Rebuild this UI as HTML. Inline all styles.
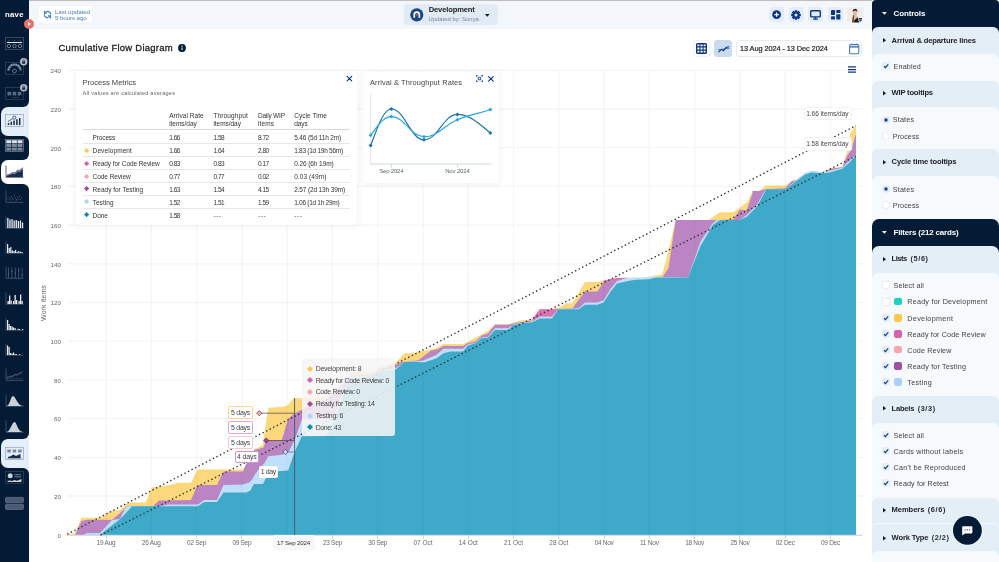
<!DOCTYPE html>
<html><head><meta charset="utf-8"><title>Cumulative Flow Diagram</title><style>
html,body{margin:0;padding:0}
body{width:999px;height:562px;overflow:hidden;background:#fff;position:relative;font-family:"Liberation Sans",sans-serif}
.abs{position:absolute}
svg{overflow:visible}
.t{position:absolute;white-space:pre;line-height:1.15;font-family:"Liberation Sans",sans-serif}
.panel{background:#fff;border-radius:4px;box-shadow:0 1px 6px rgba(60,80,110,0.09)}
</style></head>
<body>
<div id="root" style="position:absolute;left:0;top:0;width:999px;height:562px;will-change:transform">
<svg class="abs" style="left:0;top:0" width="999" height="562" viewBox="0 0 999 562">
<line x1="68" x2="862.5" y1="534.7" y2="534.7" stroke="#f5f5f5" stroke-width="1.3"/>
<line x1="68" x2="862.5" y1="496.0" y2="496.0" stroke="#f5f5f5" stroke-width="1.3"/>
<line x1="68" x2="862.5" y1="457.3" y2="457.3" stroke="#f5f5f5" stroke-width="1.3"/>
<line x1="68" x2="862.5" y1="418.6" y2="418.6" stroke="#f5f5f5" stroke-width="1.3"/>
<line x1="68" x2="862.5" y1="379.9" y2="379.9" stroke="#f5f5f5" stroke-width="1.3"/>
<line x1="68" x2="862.5" y1="341.2" y2="341.2" stroke="#f5f5f5" stroke-width="1.3"/>
<line x1="68" x2="862.5" y1="302.5" y2="302.5" stroke="#f5f5f5" stroke-width="1.3"/>
<line x1="68" x2="862.5" y1="263.8" y2="263.8" stroke="#f5f5f5" stroke-width="1.3"/>
<line x1="68" x2="862.5" y1="225.1" y2="225.1" stroke="#f5f5f5" stroke-width="1.3"/>
<line x1="68" x2="862.5" y1="186.4" y2="186.4" stroke="#f5f5f5" stroke-width="1.3"/>
<line x1="68" x2="862.5" y1="147.7" y2="147.7" stroke="#f5f5f5" stroke-width="1.3"/>
<line x1="68" x2="862.5" y1="109.0" y2="109.0" stroke="#f5f5f5" stroke-width="1.3"/>
<line x1="68" x2="862.5" y1="70.3" y2="70.3" stroke="#f5f5f5" stroke-width="1.3"/>
<line x1="106.0" x2="106.0" y1="71" y2="535" stroke="#f5f5f5" stroke-width="1.3"/>
<line x1="151.3" x2="151.3" y1="71" y2="535" stroke="#f5f5f5" stroke-width="1.3"/>
<line x1="196.6" x2="196.6" y1="71" y2="535" stroke="#f5f5f5" stroke-width="1.3"/>
<line x1="241.8" x2="241.8" y1="71" y2="535" stroke="#f5f5f5" stroke-width="1.3"/>
<line x1="287.1" x2="287.1" y1="71" y2="535" stroke="#f5f5f5" stroke-width="1.3"/>
<line x1="332.4" x2="332.4" y1="71" y2="535" stroke="#f5f5f5" stroke-width="1.3"/>
<line x1="377.7" x2="377.7" y1="71" y2="535" stroke="#f5f5f5" stroke-width="1.3"/>
<line x1="423.0" x2="423.0" y1="71" y2="535" stroke="#f5f5f5" stroke-width="1.3"/>
<line x1="468.2" x2="468.2" y1="71" y2="535" stroke="#f5f5f5" stroke-width="1.3"/>
<line x1="513.5" x2="513.5" y1="71" y2="535" stroke="#f5f5f5" stroke-width="1.3"/>
<line x1="558.8" x2="558.8" y1="71" y2="535" stroke="#f5f5f5" stroke-width="1.3"/>
<line x1="604.1" x2="604.1" y1="71" y2="535" stroke="#f5f5f5" stroke-width="1.3"/>
<line x1="649.4" x2="649.4" y1="71" y2="535" stroke="#f5f5f5" stroke-width="1.3"/>
<line x1="694.6" x2="694.6" y1="71" y2="535" stroke="#f5f5f5" stroke-width="1.3"/>
<line x1="739.9" x2="739.9" y1="71" y2="535" stroke="#f5f5f5" stroke-width="1.3"/>
<line x1="785.2" x2="785.2" y1="71" y2="535" stroke="#f5f5f5" stroke-width="1.3"/>
<line x1="830.5" x2="830.5" y1="71" y2="535" stroke="#f5f5f5" stroke-width="1.3"/>
<line x1="67" x2="862.5" y1="535.3" y2="535.3" stroke="#ccd6eb" stroke-width="1"/>
<polygon points="67.2,533.5 75.0,533.5 81.5,517.8 101.0,517.8 107.0,513.0 113.0,510.5 120.0,510.0 126.0,504.0 132.0,502.5 145.5,502.5 152.0,487.5 158.5,486.5 171.0,485.0 177.5,482.8 191.0,482.8 197.5,469.5 243.0,469.5 246.0,464.0 254.8,449.0 262.6,445.6 268.3,407.8 281.8,407.1 288.2,405.0 293.2,398.4 302.0,398.0 326.0,398.0 344.0,382.7 351.0,373.0 372.5,372.0 379.6,366.7 395.7,363.0 404.2,353.2 411.4,353.2 431.0,349.6 437.0,347.8 443.4,344.0 463.0,344.0 468.3,341.6 487.9,331.0 495.0,324.2 508.3,324.2 520.8,320.6 527.0,319.9 532.5,319.0 539.6,309.2 552.0,309.2 559.0,307.4 566.3,303.3 572.5,303.3 585.0,282.0 597.4,282.0 603.6,280.4 617.0,278.0 626.8,277.7 644.6,277.7 651.7,276.3 662.2,274.5 668.5,250.5 675.6,219.9 708.5,219.9 720.0,212.2 733.4,212.2 739.6,207.8 746.8,202.5 753.0,190.9 759.6,191.0 765.8,185.6 785.4,185.6 791.6,181.2 797.0,179.4 805.0,173.2 811.2,171.4 823.6,172.3 830.7,167.8 842.3,167.0 846.8,152.7 850.3,133.0 856.0,125.0 856.0,534.8 67.2,534.8" fill="#fcd77b"/>
<polygon points="75.0,534.8 81.5,521.0 87.0,519.8 112.0,519.8 119.0,514.0 125.0,508.0 126.0,506.2 132.0,506.2 153.0,506.2 159.0,500.5 191.0,500.0 197.5,485.0 217.0,485.0 223.5,471.5 243.0,471.5 246.0,464.5 254.0,449.9 263.3,447.7 266.2,440.5 281.8,439.9 288.2,418.5 294.6,413.5 302.0,409.4 313.0,405.0 326.0,399.5 332.5,394.5 340.5,386.0 351.0,375.6 372.5,374.5 379.6,369.0 395.7,365.0 402.5,361.4 404.2,362.0 418.5,360.3 431.0,350.5 437.0,349.6 443.4,346.0 463.0,346.0 468.0,343.0 475.4,341.6 481.6,335.4 488.0,333.6 495.0,324.7 508.0,324.7 512.8,323.8 520.8,322.0 530.0,321.0 532.5,321.6 539.6,316.7 552.0,316.7 558.3,309.2 572.5,308.3 585.0,291.4 597.4,291.4 603.6,282.5 617.0,279.0 626.8,278.4 635.7,278.0 644.6,278.0 651.7,277.0 662.2,277.5 668.5,268.3 675.6,219.9 708.5,219.9 716.5,219.9 733.4,219.4 739.6,210.0 746.8,210.0 753.0,191.8 759.6,191.5 765.0,189.2 785.4,188.3 791.6,181.2 797.0,179.8 802.0,176.0 805.0,173.2 811.2,171.4 823.6,172.3 830.7,168.7 842.3,167.3 846.8,156.3 851.2,150.0 856.0,134.0 856.0,534.8 75.0,534.8" fill="#bb84c2"/>
<polygon points="532.5,319.0 539.6,309.2 552.0,309.2 558.3,308.6 552.0,316.7 539.6,316.7 532.5,321.6" fill="#d974b7"/>
<polygon points="603.6,280.4 617.0,278.0 626.8,277.7 626.8,278.6 617.0,279.6 603.6,282.5" fill="#d974b7"/>
<polygon points="752.5,191.0 759.6,191.0 765.0,189.2 759.6,192.2 752.5,192.6" fill="#d974b7"/>
<polygon points="83.0,534.8 87.0,533.0 100.0,533.0 112.0,520.0 120.0,519.0 126.0,506.2 132.0,506.2 159.0,506.2 169.0,504.5 198.0,504.5 204.0,500.0 217.0,500.0 223.5,485.0 243.0,484.5 250.0,482.0 253.0,478.0 255.5,473.4 260.0,468.0 264.7,462.7 268.3,456.3 281.8,454.8 288.2,452.7 294.6,439.9 301.8,419.5 332.5,418.6 339.0,404.0 345.4,387.5 351.0,376.5 372.5,375.5 379.6,370.5 396.2,368.0 404.2,362.0 418.5,361.2 423.8,360.3 436.3,355.0 443.4,348.7 463.0,348.7 468.3,344.0 475.4,343.0 481.6,337.2 487.9,337.2 495.0,328.3 508.3,328.3 512.8,324.7 520.8,323.0 530.0,322.0 532.5,321.6 539.6,316.7 552.0,316.7 558.3,309.2 578.7,308.3 585.0,302.6 597.4,302.6 603.6,300.3 610.7,288.7 617.0,281.0 626.8,277.9 635.7,277.5 644.6,277.5 651.7,276.7 656.0,276.8 688.0,277.5 700.5,241.6 713.0,222.9 716.5,220.2 739.6,219.9 746.8,214.9 757.4,204.2 764.6,190.9 765.8,189.2 785.4,189.2 791.6,184.0 805.0,172.7 811.2,170.9 823.6,171.9 830.7,170.3 842.3,167.8 848.5,161.6 856.0,154.5 856.0,534.8 83.0,534.8" fill="#bfdffc"/>
<polygon points="100.0,534.8 119.0,520.0 126.0,513.0 132.0,506.2 198.0,506.2 204.0,502.0 217.0,502.0 223.5,492.5 246.0,492.5 250.0,491.0 254.0,484.0 263.0,484.0 266.0,478.0 270.0,472.0 277.8,471.2 288.2,470.5 294.6,452.0 301.8,436.3 326.0,436.0 332.5,424.0 339.0,408.0 345.4,389.0 351.0,378.0 372.5,376.5 379.6,372.0 396.2,369.2 404.2,362.0 418.5,362.0 423.8,362.6 436.3,358.5 443.4,353.2 450.5,351.4 463.0,351.4 468.3,345.2 475.4,343.4 481.6,338.0 487.9,338.0 495.0,330.0 508.3,330.0 512.8,325.2 520.8,323.5 530.0,322.4 532.5,322.2 539.6,318.4 552.0,318.4 558.3,309.2 578.7,309.2 585.0,304.7 597.4,304.7 603.6,302.6 610.7,291.4 617.0,283.4 626.8,281.2 635.7,279.8 649.0,279.3 656.0,277.5 688.0,277.5 700.5,246.0 713.0,224.7 720.0,220.2 739.6,219.9 746.8,216.7 757.4,206.0 765.4,190.9 765.8,189.2 785.4,189.2 791.6,184.7 805.0,174.4 811.2,172.6 823.6,173.2 830.7,172.3 842.3,168.7 848.5,163.4 856.0,155.4 856.0,534.8 100.0,534.8" fill="#3fa9c9"/>
<clipPath id="areaclip"><polygon points="67.2,533.5 75.0,533.5 81.5,517.8 101.0,517.8 107.0,513.0 113.0,510.5 120.0,510.0 126.0,504.0 132.0,502.5 145.5,502.5 152.0,487.5 158.5,486.5 171.0,485.0 177.5,482.8 191.0,482.8 197.5,469.5 243.0,469.5 246.0,464.0 254.8,449.0 262.6,445.6 268.3,407.8 281.8,407.1 288.2,405.0 293.2,398.4 302.0,398.0 326.0,398.0 344.0,382.7 351.0,373.0 372.5,372.0 379.6,366.7 395.7,363.0 404.2,353.2 411.4,353.2 431.0,349.6 437.0,347.8 443.4,344.0 463.0,344.0 468.3,341.6 487.9,331.0 495.0,324.2 508.3,324.2 520.8,320.6 527.0,319.9 532.5,319.0 539.6,309.2 552.0,309.2 559.0,307.4 566.3,303.3 572.5,303.3 585.0,282.0 597.4,282.0 603.6,280.4 617.0,278.0 626.8,277.7 644.6,277.7 651.7,276.3 662.2,274.5 668.5,250.5 675.6,219.9 708.5,219.9 720.0,212.2 733.4,212.2 739.6,207.8 746.8,202.5 753.0,190.9 759.6,191.0 765.8,185.6 785.4,185.6 791.6,181.2 797.0,179.4 805.0,173.2 811.2,171.4 823.6,172.3 830.7,167.8 842.3,167.0 846.8,152.7 850.3,133.0 856.0,125.0 856.0,534.8 67.2,534.8"/></clipPath><g clip-path="url(#areaclip)">
<line x1="106.0" x2="106.0" y1="125" y2="534.8" stroke="#000" stroke-opacity="0.04" stroke-width="1"/>
<line x1="151.3" x2="151.3" y1="125" y2="534.8" stroke="#000" stroke-opacity="0.04" stroke-width="1"/>
<line x1="196.6" x2="196.6" y1="125" y2="534.8" stroke="#000" stroke-opacity="0.04" stroke-width="1"/>
<line x1="241.8" x2="241.8" y1="125" y2="534.8" stroke="#000" stroke-opacity="0.04" stroke-width="1"/>
<line x1="287.1" x2="287.1" y1="125" y2="534.8" stroke="#000" stroke-opacity="0.04" stroke-width="1"/>
<line x1="332.4" x2="332.4" y1="125" y2="534.8" stroke="#000" stroke-opacity="0.04" stroke-width="1"/>
<line x1="377.7" x2="377.7" y1="125" y2="534.8" stroke="#000" stroke-opacity="0.04" stroke-width="1"/>
<line x1="423.0" x2="423.0" y1="125" y2="534.8" stroke="#000" stroke-opacity="0.04" stroke-width="1"/>
<line x1="468.2" x2="468.2" y1="125" y2="534.8" stroke="#000" stroke-opacity="0.04" stroke-width="1"/>
<line x1="513.5" x2="513.5" y1="125" y2="534.8" stroke="#000" stroke-opacity="0.04" stroke-width="1"/>
<line x1="558.8" x2="558.8" y1="125" y2="534.8" stroke="#000" stroke-opacity="0.04" stroke-width="1"/>
<line x1="604.1" x2="604.1" y1="125" y2="534.8" stroke="#000" stroke-opacity="0.04" stroke-width="1"/>
<line x1="649.4" x2="649.4" y1="125" y2="534.8" stroke="#000" stroke-opacity="0.04" stroke-width="1"/>
<line x1="694.6" x2="694.6" y1="125" y2="534.8" stroke="#000" stroke-opacity="0.04" stroke-width="1"/>
<line x1="739.9" x2="739.9" y1="125" y2="534.8" stroke="#000" stroke-opacity="0.04" stroke-width="1"/>
<line x1="785.2" x2="785.2" y1="125" y2="534.8" stroke="#000" stroke-opacity="0.04" stroke-width="1"/>
<line x1="830.5" x2="830.5" y1="125" y2="534.8" stroke="#000" stroke-opacity="0.04" stroke-width="1"/>
</g>
<line x1="67.2" y1="534.2" x2="856" y2="125.6" stroke="#2e2e2e" stroke-width="1.35" stroke-dasharray="1.4 2.6"/>
<line x1="100.5" y1="535.2" x2="856" y2="156" stroke="#2e2e2e" stroke-width="1.35" stroke-dasharray="1.4 2.6"/>
<line x1="294.6" x2="294.6" y1="398" y2="535" stroke="#4a5563" stroke-width="0.9"/>
<line x1="259.3" x2="294.5" y1="413.2" y2="413.2" stroke="#555" stroke-width="0.8"/>
<line x1="266.2" x2="294.5" y1="440.5" y2="440.5" stroke="#555" stroke-width="0.8"/>
<line x1="285.4" x2="294.5" y1="452" y2="452" stroke="#777" stroke-width="0.8"/>
<polygon points="256.7,413.2 259.3,410.6 261.9,413.2 259.3,415.8" fill="#f9a8ab" stroke="#4a3a3a" stroke-width="0.7"/>
<polygon points="263.6,440.5 266.2,437.9 268.8,440.5 266.2,443.1" fill="#a244a7" stroke="#4a2a4a" stroke-width="0.7"/>
<polygon points="282.8,452.0 285.4,449.4 288.0,452.0 285.4,454.6" fill="#b9dcf8" stroke="#3a4a5a" stroke-width="0.7"/>
</svg>
<span class="t" style="left:57.50px;top:531.58px;font-size:6.2px;color:#666;letter-spacing:0.147px;">0</span>
<span class="t" style="left:53.90px;top:492.88px;font-size:6.2px;color:#666;letter-spacing:0.155px;">20</span>
<span class="t" style="left:53.90px;top:454.18px;font-size:6.2px;color:#666;letter-spacing:0.155px;">40</span>
<span class="t" style="left:53.90px;top:415.49px;font-size:6.2px;color:#666;letter-spacing:0.155px;">60</span>
<span class="t" style="left:53.90px;top:376.79px;font-size:6.2px;color:#666;letter-spacing:0.155px;">80</span>
<span class="t" style="left:50.40px;top:338.10px;font-size:6.2px;color:#666;letter-spacing:0.124px;">100</span>
<span class="t" style="left:50.40px;top:299.40px;font-size:6.2px;color:#666;letter-spacing:0.124px;">120</span>
<span class="t" style="left:50.40px;top:260.70px;font-size:6.2px;color:#666;letter-spacing:0.124px;">140</span>
<span class="t" style="left:50.40px;top:222.01px;font-size:6.2px;color:#666;letter-spacing:0.124px;">160</span>
<span class="t" style="left:50.40px;top:183.31px;font-size:6.2px;color:#666;letter-spacing:0.124px;">180</span>
<span class="t" style="left:50.40px;top:144.62px;font-size:6.2px;color:#666;letter-spacing:0.124px;">200</span>
<span class="t" style="left:50.40px;top:105.92px;font-size:6.2px;color:#666;letter-spacing:0.124px;">220</span>
<span class="t" style="left:50.40px;top:67.22px;font-size:6.2px;color:#666;letter-spacing:0.124px;">240</span>
<div class="abs" style="left:44px;top:303px;width:0;height:0"><span class="t" style="transform:translate(-50%,-50%) rotate(-90deg);font-size:7px;color:#666;letter-spacing:0.1px;left:0;top:0">Work items</span></div>
<span class="t" style="left:96.55px;top:539.22px;font-size:6.5px;color:#6a6a6a;letter-spacing:-0.225px;">19 Aug</span>
<div class="abs" style="left:105.5px;top:535px;width:1px;height:4px;background:#ccd6eb"></div>
<span class="t" style="left:141.83px;top:539.22px;font-size:6.5px;color:#6a6a6a;letter-spacing:-0.225px;">26 Aug</span>
<div class="abs" style="left:150.8px;top:535px;width:1px;height:4px;background:#ccd6eb"></div>
<span class="t" style="left:187.11px;top:539.22px;font-size:6.5px;color:#6a6a6a;letter-spacing:-0.285px;">02 Sep</span>
<div class="abs" style="left:196.1px;top:535px;width:1px;height:4px;background:#ccd6eb"></div>
<span class="t" style="left:232.39px;top:539.22px;font-size:6.5px;color:#6a6a6a;letter-spacing:-0.285px;">09 Sep</span>
<div class="abs" style="left:241.3px;top:535px;width:1px;height:4px;background:#ccd6eb"></div>
<span class="t" style="left:322.95px;top:539.22px;font-size:6.5px;color:#6a6a6a;letter-spacing:-0.285px;">23 Sep</span>
<div class="abs" style="left:331.9px;top:535px;width:1px;height:4px;background:#ccd6eb"></div>
<span class="t" style="left:368.23px;top:539.22px;font-size:6.5px;color:#6a6a6a;letter-spacing:-0.285px;">30 Sep</span>
<div class="abs" style="left:377.2px;top:535px;width:1px;height:4px;background:#ccd6eb"></div>
<span class="t" style="left:413.51px;top:539.22px;font-size:6.5px;color:#6a6a6a;letter-spacing:-0.043px;">07 Oct</span>
<div class="abs" style="left:422.5px;top:535px;width:1px;height:4px;background:#ccd6eb"></div>
<span class="t" style="left:458.79px;top:539.22px;font-size:6.5px;color:#6a6a6a;letter-spacing:-0.043px;">14 Oct</span>
<div class="abs" style="left:467.7px;top:535px;width:1px;height:4px;background:#ccd6eb"></div>
<span class="t" style="left:504.07px;top:539.22px;font-size:6.5px;color:#6a6a6a;letter-spacing:-0.043px;">21 Oct</span>
<div class="abs" style="left:513.0px;top:535px;width:1px;height:4px;background:#ccd6eb"></div>
<span class="t" style="left:549.35px;top:539.22px;font-size:6.5px;color:#6a6a6a;letter-spacing:-0.043px;">28 Oct</span>
<div class="abs" style="left:558.3px;top:535px;width:1px;height:4px;background:#ccd6eb"></div>
<span class="t" style="left:594.63px;top:539.22px;font-size:6.5px;color:#6a6a6a;letter-spacing:-0.285px;">04 Nov</span>
<div class="abs" style="left:603.6px;top:535px;width:1px;height:4px;background:#ccd6eb"></div>
<span class="t" style="left:639.91px;top:539.22px;font-size:6.5px;color:#6a6a6a;letter-spacing:-0.204px;">11 Nov</span>
<div class="abs" style="left:648.9px;top:535px;width:1px;height:4px;background:#ccd6eb"></div>
<span class="t" style="left:685.19px;top:539.22px;font-size:6.5px;color:#6a6a6a;letter-spacing:-0.285px;">18 Nov</span>
<div class="abs" style="left:694.1px;top:535px;width:1px;height:4px;background:#ccd6eb"></div>
<span class="t" style="left:730.47px;top:539.22px;font-size:6.5px;color:#6a6a6a;letter-spacing:-0.285px;">25 Nov</span>
<div class="abs" style="left:739.4px;top:535px;width:1px;height:4px;background:#ccd6eb"></div>
<span class="t" style="left:775.75px;top:539.22px;font-size:6.5px;color:#6a6a6a;letter-spacing:-0.285px;">02 Dec</span>
<div class="abs" style="left:784.7px;top:535px;width:1px;height:4px;background:#ccd6eb"></div>
<span class="t" style="left:821.03px;top:539.22px;font-size:6.5px;color:#6a6a6a;letter-spacing:-0.285px;">09 Dec</span>
<div class="abs" style="left:830.0px;top:535px;width:1px;height:4px;background:#ccd6eb"></div>
<div class="abs" style="left:273.4px;top:535px;width:41.6px;height:15px;background:#f7f7f7;border-radius:2px"></div>
<span class="t" style="left:276.90px;top:539.08px;font-size:6.2px;color:#333;letter-spacing:-0.174px;">17 Sep 2024</span>
<div class="abs" style="left:228.4px;top:406.4px;width:24.2px;height:12.8px;background:#fff;border:1px solid #fcd98a;border-radius:2px;box-sizing:border-box"></div>
<span class="t" style="left:230.90px;top:409.26px;font-size:7px;color:#444;letter-spacing:-0.238px;">5 days</span>
<div class="abs" style="left:228.4px;top:421.4px;width:24.2px;height:12.8px;background:#fff;border:1px solid #e9a4d6;border-radius:2px;box-sizing:border-box"></div>
<span class="t" style="left:230.90px;top:424.26px;font-size:7px;color:#444;letter-spacing:-0.238px;">5 days</span>
<div class="abs" style="left:228.4px;top:436.3px;width:24.2px;height:12.8px;background:#fff;border:1px solid #fbc9c9;border-radius:2px;box-sizing:border-box"></div>
<span class="t" style="left:230.90px;top:439.16px;font-size:7px;color:#444;letter-spacing:-0.238px;">5 days</span>
<div class="abs" style="left:234.8px;top:450.6px;width:24.0px;height:12.4px;background:#fff;border:1px solid #c795cf;border-radius:2px;box-sizing:border-box"></div>
<span class="t" style="left:236.95px;top:453.26px;font-size:7px;color:#444;letter-spacing:-0.154px;">4 days</span>
<div class="abs" style="left:258.8px;top:465.8px;width:19.0px;height:11.8px;background:#fff;border-radius:2px;box-sizing:border-box"></div>
<span class="t" style="left:260.75px;top:468.16px;font-size:7px;color:#444;letter-spacing:-0.405px;">1 day</span>
<div class="abs" style="left:804.0px;top:107.0px;width:47.8px;height:13.4px;background:#fff;border:1px solid #f2f2f2;border-radius:2px;box-sizing:border-box"></div>
<span class="t" style="left:806.15px;top:109.82px;font-size:6.6px;color:#4a4a4a;letter-spacing:-0.028px;">1.66 items/day</span>
<div class="abs" style="left:804.0px;top:137.4px;width:47.8px;height:13.4px;background:#fff;border:1px solid #f2f2f2;border-radius:2px;box-sizing:border-box"></div>
<span class="t" style="left:806.15px;top:140.22px;font-size:6.6px;color:#4a4a4a;letter-spacing:-0.028px;">1.58 items/day</span>
<div class="abs" style="left:302.3px;top:358.3px;width:92.9px;height:78.1px;background:rgba(246,246,246,0.86);border-radius:3px"></div>
<svg class="abs" style="left:306.8px;top:365.6px" width="6" height="6"><polygon points="0,3 3,0 6,3 3,6" fill="#fbc84f"/></svg>
<span class="t" style="left:315.70px;top:365.01px;font-size:6.9px;color:#444;letter-spacing:-0.190px;">Development: 8</span>
<svg class="abs" style="left:306.8px;top:377.3px" width="6" height="6"><polygon points="0,3 3,0 6,3 3,6" fill="#d95fb0"/></svg>
<span class="t" style="left:315.70px;top:376.75px;font-size:6.9px;color:#444;letter-spacing:-0.293px;">Ready for Code Review: 0</span>
<svg class="abs" style="left:306.8px;top:389.1px" width="6" height="6"><polygon points="0,3 3,0 6,3 3,6" fill="#fba5ab"/></svg>
<span class="t" style="left:315.70px;top:388.49px;font-size:6.9px;color:#444;letter-spacing:-0.318px;">Code Review: 0</span>
<svg class="abs" style="left:306.8px;top:400.8px" width="6" height="6"><polygon points="0,3 3,0 6,3 3,6" fill="#a04aa8"/></svg>
<span class="t" style="left:315.70px;top:400.23px;font-size:6.9px;color:#444;letter-spacing:-0.286px;">Ready for Testing: 14</span>
<svg class="abs" style="left:306.8px;top:412.6px" width="6" height="6"><polygon points="0,3 3,0 6,3 3,6" fill="#a9d4fb"/></svg>
<span class="t" style="left:315.70px;top:411.97px;font-size:6.9px;color:#444;letter-spacing:-0.210px;">Testing: 6</span>
<svg class="abs" style="left:306.8px;top:424.3px" width="6" height="6"><polygon points="0,3 3,0 6,3 3,6" fill="#118ab2"/></svg>
<span class="t" style="left:315.70px;top:423.71px;font-size:6.9px;color:#444;letter-spacing:-0.346px;">Done: 43</span>
<div class="abs panel" style="left:75.5px;top:71px;width:281.5px;height:153.5px"></div>
<span class="t" style="left:82.60px;top:78.95px;font-size:7.6px;color:#444;letter-spacing:-0.034px;">Process Metrics</span>
<span class="t" style="left:82.60px;top:89.99px;font-size:5.6px;color:#666;letter-spacing:0.227px;">All values are calculated averages</span>
<svg class="abs" style="left:0;top:0" width="999" height="562" viewBox="0 0 999 562"><path d="M347.10 76.30L351.70 80.90M351.70 76.30L347.10 80.90" fill="none" stroke="#0f3683" stroke-width="1.15" stroke-linecap="round"/></svg>
<span class="t" style="left:169.20px;top:111.72px;font-size:6.5px;color:#333;letter-spacing:0.053px;">Arrival Rate</span>
<span class="t" style="left:169.20px;top:119.92px;font-size:6.5px;color:#333;letter-spacing:-0.036px;">items/day</span>
<span class="t" style="left:213.40px;top:111.72px;font-size:6.5px;color:#333;letter-spacing:0.135px;">Throughput</span>
<span class="t" style="left:213.40px;top:119.92px;font-size:6.5px;color:#333;letter-spacing:-0.036px;">items/day</span>
<span class="t" style="left:257.90px;top:111.72px;font-size:6.5px;color:#333;letter-spacing:-0.170px;">Daily WIP</span>
<span class="t" style="left:257.90px;top:119.92px;font-size:6.5px;color:#333;letter-spacing:0.134px;">items</span>
<span class="t" style="left:294.20px;top:111.72px;font-size:6.5px;color:#333;letter-spacing:0.064px;">Cycle Time</span>
<span class="t" style="left:294.20px;top:119.92px;font-size:6.5px;color:#333;letter-spacing:-0.059px;">days</span>
<div class="abs" style="left:82.6px;top:128.8px;width:267.6px;height:1px;background:#d9d9d9"></div>
<div class="abs" style="left:82.6px;top:143.2px;width:267.6px;height:1px;background:#e6e6e6"></div>
<span class="t" style="left:92.60px;top:133.72px;font-size:6.5px;color:#333;letter-spacing:-0.141px;">Process</span>
<span class="t" style="left:169.20px;top:133.72px;font-size:6.5px;color:#333;letter-spacing:-0.464px;">1.66</span>
<span class="t" style="left:213.40px;top:133.72px;font-size:6.5px;color:#333;letter-spacing:-0.464px;">1.58</span>
<span class="t" style="left:257.90px;top:133.72px;font-size:6.5px;color:#333;letter-spacing:-0.464px;">8.72</span>
<span class="t" style="left:294.20px;top:133.72px;font-size:6.5px;color:#333;letter-spacing:-0.133px;">5.46 (5d 11h 2m)</span>
<div class="abs" style="left:82.6px;top:156.3px;width:267.6px;height:1px;background:#e6e6e6"></div>
<svg class="abs" style="left:84.1px;top:147.6px" width="5.2" height="5.2"><polygon points="0,2.6 2.6,0 5.2,2.6 2.6,5.2" fill="#fbc84f"/></svg>
<span class="t" style="left:92.60px;top:146.79px;font-size:6.5px;color:#333;letter-spacing:0.099px;">Development</span>
<span class="t" style="left:169.20px;top:146.79px;font-size:6.5px;color:#333;letter-spacing:-0.464px;">1.66</span>
<span class="t" style="left:213.40px;top:146.79px;font-size:6.5px;color:#333;letter-spacing:-0.464px;">1.64</span>
<span class="t" style="left:257.90px;top:146.79px;font-size:6.5px;color:#333;letter-spacing:-0.464px;">2.80</span>
<span class="t" style="left:294.20px;top:146.79px;font-size:6.5px;color:#333;letter-spacing:-0.260px;">1.83 (1d 19h 56m)</span>
<div class="abs" style="left:82.6px;top:169.3px;width:267.6px;height:1px;background:#e6e6e6"></div>
<svg class="abs" style="left:84.1px;top:160.6px" width="5.2" height="5.2"><polygon points="0,2.6 2.6,0 5.2,2.6 2.6,5.2" fill="#d95fb0"/></svg>
<span class="t" style="left:92.60px;top:159.86px;font-size:6.5px;color:#333;letter-spacing:-0.079px;">Ready for Code Review</span>
<span class="t" style="left:169.20px;top:159.86px;font-size:6.5px;color:#333;letter-spacing:-0.464px;">0.83</span>
<span class="t" style="left:213.40px;top:159.86px;font-size:6.5px;color:#333;letter-spacing:-0.464px;">0.83</span>
<span class="t" style="left:257.90px;top:159.86px;font-size:6.5px;color:#333;letter-spacing:-0.464px;">0.17</span>
<span class="t" style="left:294.20px;top:159.86px;font-size:6.5px;color:#333;letter-spacing:-0.082px;">0.26 (6h 19m)</span>
<div class="abs" style="left:82.6px;top:182.4px;width:267.6px;height:1px;background:#e6e6e6"></div>
<svg class="abs" style="left:84.1px;top:173.7px" width="5.2" height="5.2"><polygon points="0,2.6 2.6,0 5.2,2.6 2.6,5.2" fill="#fba5ab"/></svg>
<span class="t" style="left:92.60px;top:172.93px;font-size:6.5px;color:#333;letter-spacing:-0.061px;">Code Review</span>
<span class="t" style="left:169.20px;top:172.93px;font-size:6.5px;color:#333;letter-spacing:-0.464px;">0.77</span>
<span class="t" style="left:213.40px;top:172.93px;font-size:6.5px;color:#333;letter-spacing:-0.464px;">0.77</span>
<span class="t" style="left:257.90px;top:172.93px;font-size:6.5px;color:#333;letter-spacing:-0.464px;">0.02</span>
<span class="t" style="left:294.20px;top:172.93px;font-size:6.5px;color:#333;letter-spacing:0.076px;">0.03 (49m)</span>
<div class="abs" style="left:82.6px;top:195.0px;width:267.6px;height:1px;background:#e6e6e6"></div>
<svg class="abs" style="left:84.1px;top:186.3px" width="5.2" height="5.2"><polygon points="0,2.6 2.6,0 5.2,2.6 2.6,5.2" fill="#a04aa8"/></svg>
<span class="t" style="left:92.60px;top:185.50px;font-size:6.5px;color:#333;">Ready for Testing</span>
<span class="t" style="left:169.20px;top:185.50px;font-size:6.5px;color:#333;letter-spacing:-0.464px;">1.63</span>
<span class="t" style="left:213.40px;top:185.50px;font-size:6.5px;color:#333;letter-spacing:-0.464px;">1.54</span>
<span class="t" style="left:257.90px;top:185.50px;font-size:6.5px;color:#333;letter-spacing:-0.464px;">4.15</span>
<span class="t" style="left:294.20px;top:185.50px;font-size:6.5px;color:#333;letter-spacing:-0.137px;">2.57 (2d 13h 39m)</span>
<div class="abs" style="left:82.6px;top:208.0px;width:267.6px;height:1px;background:#e6e6e6"></div>
<svg class="abs" style="left:84.1px;top:199.3px" width="5.2" height="5.2"><polygon points="0,2.6 2.6,0 5.2,2.6 2.6,5.2" fill="#a9d4fb"/></svg>
<span class="t" style="left:92.60px;top:198.57px;font-size:6.5px;color:#333;letter-spacing:0.056px;">Testing</span>
<span class="t" style="left:169.20px;top:198.57px;font-size:6.5px;color:#333;letter-spacing:-0.464px;">1.52</span>
<span class="t" style="left:213.40px;top:198.57px;font-size:6.5px;color:#333;letter-spacing:-0.464px;">1.51</span>
<span class="t" style="left:257.90px;top:198.57px;font-size:6.5px;color:#333;letter-spacing:-0.464px;">1.59</span>
<span class="t" style="left:294.20px;top:198.57px;font-size:6.5px;color:#333;letter-spacing:-0.276px;">1.06 (1d 1h 29m)</span>
<svg class="abs" style="left:84.1px;top:212.4px" width="5.2" height="5.2"><polygon points="0,2.6 2.6,0 5.2,2.6 2.6,5.2" fill="#118ab2"/></svg>
<span class="t" style="left:92.60px;top:211.64px;font-size:6.5px;color:#333;letter-spacing:-0.062px;">Done</span>
<span class="t" style="left:169.20px;top:211.64px;font-size:6.5px;color:#333;letter-spacing:-0.464px;">1.58</span>
<span class="t" style="left:213.40px;top:211.64px;font-size:6.5px;color:#555;letter-spacing:0.700px;">---</span>
<span class="t" style="left:257.90px;top:211.64px;font-size:6.5px;color:#555;letter-spacing:0.700px;">---</span>
<span class="t" style="left:294.20px;top:211.64px;font-size:6.5px;color:#555;letter-spacing:0.700px;">---</span>
<div class="abs panel" style="left:362.8px;top:71.7px;width:136.2px;height:111.3px"></div>
<span class="t" style="left:370.00px;top:78.55px;font-size:7.4px;color:#444;letter-spacing:0.119px;">Arrival &amp; Throughput Rates</span>
<svg class="abs" style="left:0;top:0" width="999" height="562" viewBox="0 0 999 562"><path d="M488.60 76.60L493.20 81.20M493.20 76.60L488.60 81.20" fill="none" stroke="#0f3683" stroke-width="1.15" stroke-linecap="round"/></svg>
<svg class="abs" style="left:475.7px;top:75.3px" width="7" height="7" viewBox="0 0 8 8" fill="none" stroke="#1d4389" stroke-width="0.9"><path d="M0.5 2.2V0.5H2.2M5.8 0.5H7.5V2.2M7.5 5.8V7.5H5.8M2.2 7.5H0.5V5.8"/><rect x="2.5" y="2.5" width="3" height="3"/></svg>
<svg class="abs" style="left:0;top:0" width="999" height="562" viewBox="0 0 999 562" fill="none">
<line x1="370.6" x2="370.6" y1="93" y2="164" stroke="#e6e6e6" stroke-width="1"/>
<line x1="370.6" x2="491.6" y1="164" y2="164" stroke="#ccd6eb" stroke-width="1"/>
<line x1="391.3" x2="391.3" y1="164" y2="167.5" stroke="#ccd6eb" stroke-width="1"/>
<line x1="457.4" x2="457.4" y1="164" y2="167.5" stroke="#ccd6eb" stroke-width="1"/>
<path d="M370.6 145.6 C375.8 132.8 382.6 109.0 391.3 109.0 C405.0 109.0 410.3 139.8 424.0 139.8 C438.0 139.8 443.4 114.4 457.4 114.4 C471.2 114.4 482.0 126.4 490.3 132.9" stroke="#1a73a7" stroke-width="1.15"/>
<path d="M370.6 135.3 C375.8 128.8 382.6 116.6 391.3 116.6 C405.0 116.6 410.3 136.7 424.0 136.7 C438.0 136.7 443.4 125.5 457.4 119.7 C471.2 114.0 482.0 113.1 490.3 109.5" stroke="#27a5e3" stroke-width="1.15"/>
<polygon points="368.6,145.6 370.6,143.6 372.6,145.6 370.6,147.6" fill="#1a73a7"/>
<polygon points="389.3,109.0 391.3,107.0 393.3,109.0 391.3,111.0" fill="#1a73a7"/>
<polygon points="422.0,139.8 424.0,137.8 426.0,139.8 424.0,141.8" fill="#1a73a7"/>
<polygon points="455.4,114.4 457.4,112.4 459.4,114.4 457.4,116.4" fill="#1a73a7"/>
<polygon points="488.3,132.9 490.3,130.9 492.3,132.9 490.3,134.9" fill="#1a73a7"/>
<polygon points="368.6,135.3 370.6,133.3 372.6,135.3 370.6,137.3" fill="#27a5e3"/>
<polygon points="389.3,116.6 391.3,114.6 393.3,116.6 391.3,118.6" fill="#27a5e3"/>
<polygon points="422.0,136.7 424.0,134.7 426.0,136.7 424.0,138.7" fill="#27a5e3"/>
<polygon points="455.4,119.7 457.4,117.7 459.4,119.7 457.4,121.7" fill="#27a5e3"/>
<polygon points="488.3,109.5 490.3,107.5 492.3,109.5 490.3,111.5" fill="#27a5e3"/>
</svg>
<span class="t" style="left:379.30px;top:168.28px;font-size:6px;color:#666;letter-spacing:-0.213px;">Sep 2024</span>
<span class="t" style="left:445.20px;top:168.28px;font-size:6px;color:#666;letter-spacing:-0.161px;">Nov 2024</span>
<div class="abs" style="left:29px;top:0;width:843px;height:29px;background:#f3f7fc"></div>
<div class="abs" style="left:0;top:0;width:999px;height:1px;background:#bdbdbd"></div>
<div class="abs" style="left:39.2px;top:6px;width:53px;height:17.2px;background:#fff;border-radius:4px"></div>
<svg class="abs" style="left:42.6px;top:10px" width="9" height="9" viewBox="0 0 24 24" fill="none" stroke="#3f7cc0" stroke-width="3" stroke-linecap="round" stroke-linejoin="round"><path d="M20.5 11a8 8 0 0 0-13-5.5L4 8.5"/><path d="M4 3v5.5h5.5"/><path d="M3.5 13a8 8 0 0 0 13 5.5l3.500-3"/><path d="M20 21v-5.500h-5.500"/></svg>
<span class="t" style="left:54.90px;top:7.78px;font-size:6.2px;color:#4a7fbd;letter-spacing:-0.057px;">Last updated</span>
<span class="t" style="left:54.90px;top:14.08px;font-size:6.2px;color:#4a7fbd;letter-spacing:-0.081px;">5 hours ago</span>
<div class="abs" style="left:403.8px;top:3.9px;width:94.4px;height:21.5px;background:#e1ebf5;border-radius:4px"></div>
<svg class="abs" style="left:410.3px;top:7.8px" width="13.6" height="13.6" viewBox="0 0 14 14"><circle cx="7" cy="7" r="6.8" fill="#1d4389"/><path d="M4.4 10V6.8a2.600 2.600 0 0 1 5.200 0V10" fill="none" stroke="#fff" stroke-width="1.7"/><circle cx="7" cy="7" r="0.9" fill="#e8554e"/></svg>
<span class="t" style="left:428.70px;top:6.25px;font-size:7.6px;color:#222;font-weight:700;letter-spacing:-0.153px;">Development</span>
<span class="t" style="left:428.40px;top:15.58px;font-size:5.8px;color:#7b828c;letter-spacing:0.070px;">Updated by: Sonya</span>
<svg class="abs" style="left:485.2px;top:14.4px" width="4.6" height="3"><polygon points="0,0 4.6,0 2.3,2.800" fill="#111"/></svg>
<div class="abs" style="left:768.9px;top:7.0px;width:15.2px;height:15.2px;background:#e3edf7;border-radius:3.5px"></div>
<div class="abs" style="left:788.5px;top:7.0px;width:15.2px;height:15.2px;background:#e3edf7;border-radius:3.5px"></div>
<div class="abs" style="left:807.9px;top:7.0px;width:15.2px;height:15.2px;background:#e3edf7;border-radius:3.5px"></div>
<div class="abs" style="left:827.6px;top:7.0px;width:15.2px;height:15.2px;background:#e3edf7;border-radius:3.5px"></div>
<svg class="abs" style="left:771.9px;top:10.2px" width="9.2" height="9.2" viewBox="0 0 10 10"><circle cx="5" cy="5" r="4.800" fill="#0f3683"/><path d="M5 2.600V7.400M2.600 5H7.400" stroke="#fff" stroke-width="1.300"/></svg>
<svg class="abs" style="left:791.1px;top:9.8px" width="10" height="10" viewBox="-5 -5 10 10" fill="#0f3683"><rect x="-1.300" y="-4.800" width="2.600" height="2.400" rx="0.500" transform="rotate(0)" /><rect x="-1.300" y="-4.800" width="2.600" height="2.400" rx="0.500" transform="rotate(45)" /><rect x="-1.300" y="-4.800" width="2.600" height="2.400" rx="0.500" transform="rotate(90)" /><rect x="-1.300" y="-4.800" width="2.600" height="2.400" rx="0.500" transform="rotate(135)" /><rect x="-1.300" y="-4.800" width="2.600" height="2.400" rx="0.500" transform="rotate(180)" /><rect x="-1.300" y="-4.800" width="2.600" height="2.400" rx="0.500" transform="rotate(225)" /><rect x="-1.300" y="-4.800" width="2.600" height="2.400" rx="0.500" transform="rotate(270)" /><rect x="-1.300" y="-4.800" width="2.600" height="2.400" rx="0.500" transform="rotate(315)" /><circle r="3.400"/><circle r="1.500" fill="#e1ebf5"/></svg>
<svg class="abs" style="left:810.0px;top:10.2px" width="11" height="10" viewBox="0 0 11 10"><rect x="0.700" y="0.700" width="9.600" height="6.200" rx="0.800" fill="none" stroke="#0f3683" stroke-width="1.400"/><rect x="4.600" y="7" width="1.800" height="1.700" fill="#0f3683"/><rect x="3" y="8.500" width="5" height="1.200" rx="0.400" fill="#0f3683"/></svg>
<svg class="abs" style="left:830.5px;top:9.7px" width="9.4" height="9.4" viewBox="0 0 10 10" fill="#0f3683"><rect x="0" y="0" width="4.300" height="5.400" rx="0.500"/><rect x="5.600" y="0" width="4.400" height="3.300" rx="0.500"/><rect x="0" y="6.600" width="4.300" height="3.400" rx="0.500"/><rect x="5.600" y="4.500" width="4.400" height="5.500" rx="0.500"/></svg>
<svg class="abs" style="left:846.7px;top:6.5px" width="16.4" height="16" viewBox="0 0 16.400 16"><rect width="16.400" height="16" rx="4" fill="#f3ece8"/><path d="M4.300 16C4.600 12 5.200 9 5.400 6.500C5.600 2.500 7 1.300 8.200 1.300C9.600 1.300 11 2.600 11 5.500C11 7.500 10.600 8.500 11.200 9.500L13.500 11V16Z" fill="#fff"/><path d="M5.600 5.400C5.400 2.800 6.800 1.800 8.100 1.800C9.500 1.800 10.700 2.900 10.400 5.400C9.800 4 9.300 3.500 8 3.500C6.800 3.500 6.200 4.200 5.600 5.400Z" fill="#241a18"/><ellipse cx="8.100" cy="5.700" rx="2.150" ry="2.700" fill="#e3b7a3"/><path d="M5.700 4.300C6.500 2.700 9.500 2.600 10.400 4.500C9.500 3.800 8.800 3.600 8 3.600C7 3.600 6.400 3.800 5.700 4.300Z" fill="#241a18"/><path d="M6 8L7.500 8.500C7.300 11 7.200 13 7 15.500H4.900C5.200 12.500 5.600 10 6 8Z" fill="#7a4524"/><path d="M7.400 8.300L9.600 8L10.800 10.300L8.500 12.500L7.200 11Z" fill="#e3b7a3"/><path d="M7 15.500C7.200 13.500 7.600 12 8.500 12.300L10.800 10.300L12 11.500L12.500 15.500Z" fill="#16181f"/><path d="M11.300 10.300h4.300v3l-2.150 2.300l-2.150-2.300z" fill="#fff"/><path d="M11.900 10.900h3.100v2.200l-1.550 1.700l-1.550-1.700z" fill="#1d3557"/><path d="M11.900 12h3.100v0.700h-3.100z" fill="#8fa3bb"/></svg>
<span class="t" style="left:58.50px;top:43.16px;font-size:9.5px;color:#1c1c1c;font-weight:500;letter-spacing:0.249px;-webkit-text-stroke:0.28px #1c1c1c;">Cumulative Flow Diagram</span>
<svg class="abs" style="left:177.6px;top:44.2px" width="8" height="8" viewBox="0 0 8 8"><circle cx="4" cy="4" r="3.900" fill="#031b35"/><rect x="3.500" y="3.400" width="1" height="2.600" fill="#fff"/><circle cx="4" cy="2.200" r="0.650" fill="#fff"/></svg>
<div class="abs" style="left:693px;top:40px;width:17px;height:17px;background:#fff;border:1px solid #eef3f8;border-radius:3px;box-sizing:border-box"></div>
<svg class="abs" style="left:695.9px;top:42.9px" width="11" height="11" viewBox="0 0 11 11" fill="none" stroke="#0f3683"><rect x="0.700" y="0.700" width="9.600" height="9.600" rx="0.800" stroke-width="1.400"/><path d="M3.900 0.700V10.300M7.100 0.700V10.300M0.700 3.900H10.300M0.700 7.100H10.300" stroke-width="1.100"/></svg>
<div class="abs" style="left:714px;top:40px;width:18px;height:17px;background:#c9dced;border-radius:3px"></div>
<svg class="abs" style="left:717.5px;top:43.5px" width="11.5" height="10" viewBox="0 0 11.500 10" fill="none" stroke="#0f3683" stroke-linecap="round"><path d="M0.800 7.800L3.500 5.400L5.500 6.800L8 3.400L10.800 2.800" stroke-width="1.100"/><path d="M0.800 5.800L10.800 4.300" stroke-width="0.800" stroke-dasharray="1.300 1"/></svg>
<div class="abs" style="left:736px;top:39.6px;width:126.2px;height:17.9px;background:#fff;border:1px solid #e3ebf3;border-radius:3px;box-sizing:border-box"></div>
<span class="t" style="left:740.00px;top:44.75px;font-size:7.4px;color:#222;font-weight:500;letter-spacing:-0.092px;-webkit-text-stroke:0.2px #222;">13 Aug 2024 - 13 Dec 2024</span>
<svg class="abs" style="left:848.6px;top:42.6px" width="10.4" height="11.4" viewBox="0 0 10.400 11.400" fill="none" stroke="#4a7ab5"><rect x="0.600" y="1.600" width="9.200" height="9.200" rx="1" stroke-width="1.100"/><path d="M0.600 3.900H9.800" stroke-width="1.500"/><path d="M2.900 0.400V2M7.500 0.400V2" stroke-width="1.100"/></svg>
<svg class="abs" style="left:848.2px;top:66.2px" width="8" height="7" viewBox="0 0 8 7" stroke="#0f3683" stroke-width="1.250"><path d="M0 0.900H8M0 3.500H8M0 6.100H8"/></svg>
<div class="abs" style="left:0;top:0;width:29.2px;height:562px;background:#031b35;overflow:hidden">
<div class="abs" style="left:23.2px;top:101.1px;width:6px;height:40.5px;background:#e3eef8"></div><div class="abs" style="left:23.2px;top:101.1px;width:6px;height:6px;background:#031b35;border-bottom-right-radius:6px"></div><div class="abs" style="left:23.2px;top:135.6px;width:6px;height:6px;background:#031b35;border-top-right-radius:6px"></div><div class="abs" style="left:1px;top:107.1px;width:40px;height:28.5px;background:#e3eef8;border-radius:7px"></div>
<div class="abs" style="left:23.2px;top:153.8px;width:6px;height:36.2px;background:#ffffff"></div><div class="abs" style="left:23.2px;top:153.8px;width:6px;height:6px;background:#031b35;border-bottom-right-radius:6px"></div><div class="abs" style="left:23.2px;top:184px;width:6px;height:6px;background:#031b35;border-top-right-radius:6px"></div><div class="abs" style="left:1px;top:159.8px;width:40px;height:24.2px;background:#ffffff;border-radius:7px"></div>
<div class="abs" style="left:23.2px;top:433px;width:6px;height:40.8px;background:#e3eef8"></div><div class="abs" style="left:23.2px;top:433px;width:6px;height:6px;background:#031b35;border-bottom-right-radius:6px"></div><div class="abs" style="left:23.2px;top:467.8px;width:6px;height:6px;background:#031b35;border-top-right-radius:6px"></div><div class="abs" style="left:1px;top:439px;width:40px;height:28.8px;background:#e3eef8;border-radius:7px"></div>
</div>
<span class="t" style="left:5.05px;top:10.54px;font-size:7.8px;color:#fff;font-weight:700;letter-spacing:0.230px;">nave</span>
<svg class="abs" style="left:24.2px;top:19.3px" width="10" height="10" viewBox="0 0 10 10"><circle cx="5" cy="5" r="5" fill="#e8736c"/><polygon points="4,3 6.600,5 4,7" fill="#fff"/></svg>
<svg class="abs" style="left:5.0px;top:37.0px" width="19" height="13" viewBox="0 0 19 13" fill="none"><rect x="0.400" y="0.400" width="18.200" height="12.200" stroke="#56647f" stroke-width="0.600"/><path d="M2 5.500H17" stroke="#e8ecf2" stroke-width="1"/><path d="M4 3.200v1M9.500 3.200v1M15 3.200v1" stroke="#8793a8" stroke-width="0.700"/><circle cx="4" cy="9" r="1.700" stroke="#8793a8" stroke-width="0.800"/><circle cx="9.500" cy="9" r="1.700" stroke="#8793a8" stroke-width="0.800"/><circle cx="15" cy="9" r="1.700" stroke="#8793a8" stroke-width="0.800"/></svg>
<svg class="abs" style="left:5.0px;top:62.3px" width="19" height="13" viewBox="0 0 19 13" fill="none"><rect x="0.400" y="0.400" width="18.200" height="12.200" stroke="#3d4c68" stroke-width="0.600"/><path d="M3.500 8.500A6 6 0 0 1 15.500 8.500" stroke="#8793a8" stroke-width="2.200" stroke-dasharray="2.200 0.300"/><circle cx="9.500" cy="9" r="1.900" stroke="#8793a8" stroke-width="0.700"/></svg>
<svg class="abs" style="left:20.2px;top:58.4px" width="7.4" height="7.4" viewBox="0 0 7.400 7.400"><circle cx="3.700" cy="3.700" r="3.700" fill="#b4bcc8"/><rect x="2.200" y="3.300" width="3" height="2.500" fill="#1b2c4a"/><path d="M2.700 3.300V2.600a1 1 0 0 1 2 0V3.300" stroke="#1b2c4a" stroke-width="0.600" fill="none"/></svg>
<svg class="abs" style="left:5.0px;top:87.1px" width="19" height="13" viewBox="0 0 19 13" fill="none"><rect x="0.400" y="0.400" width="18.200" height="12.200" stroke="#3d4c68" stroke-width="0.600"/><rect x="2.500" y="4.800" width="3.600" height="3.600" fill="#5d6a83"/><rect x="7.600" y="4.800" width="3.600" height="3.600" fill="#5d6a83"/><rect x="12.700" y="4.800" width="3.600" height="3.600" fill="#5d6a83"/><path d="M7 10.500H14" stroke="#3d4c68" stroke-width="0.600"/></svg>
<svg class="abs" style="left:20.2px;top:83.6px" width="7.4" height="7.4" viewBox="0 0 7.400 7.400"><circle cx="3.700" cy="3.700" r="3.700" fill="#b4bcc8"/><rect x="2.200" y="3.300" width="3" height="2.500" fill="#1b2c4a"/><path d="M2.700 3.300V2.600a1 1 0 0 1 2 0V3.300" stroke="#1b2c4a" stroke-width="0.600" fill="none"/></svg>
<svg class="abs" style="left:5.0px;top:114.0px" width="19" height="13" viewBox="0 0 19 13" fill="none"><rect x="0.400" y="0.400" width="18.200" height="12.200" stroke="#8a97ad" stroke-width="0.600"/><path d="M3.500 11V9M6.300 11V7.800M9.100 11V6.500M11.900 11V5.200M14.700 11V4" stroke="#1b2c4a" stroke-width="1.500"/><path d="M3 7.500L7.500 4.800" stroke="#1b2c4a" stroke-width="0.700"/><circle cx="9.300" cy="3.600" r="1.600" stroke="#1b2c4a" stroke-width="0.700"/></svg>
<svg class="abs" style="left:5.0px;top:139.1px" width="19" height="13" viewBox="0 0 19 13" fill="none"><rect x="0.400" y="0.400" width="18.200" height="12.200" stroke="#8a95a8" stroke-width="0.600"/><rect x="1.3" y="1.2" width="5" height="3.100" fill="#dfe4ec"/><rect x="6.9" y="1.2" width="5" height="3.100" fill="#dfe4ec"/><rect x="12.5" y="1.2" width="5" height="3.100" fill="#dfe4ec"/><rect x="1.3" y="4.9" width="5" height="3.100" fill="#7b879c"/><rect x="6.9" y="4.9" width="5" height="3.100" fill="#7b879c"/><rect x="12.5" y="4.9" width="5" height="3.100" fill="#7b879c"/><rect x="1.3" y="8.6" width="5" height="3.100" fill="#7b879c"/><rect x="6.9" y="8.6" width="5" height="3.100" fill="#7b879c"/><rect x="12.5" y="8.6" width="5" height="3.100" fill="#7b879c"/></svg>
<svg class="abs" style="left:5.0px;top:164.7px" width="19" height="13" viewBox="0 0 19 13" fill="none"><path d="M1 0.500V12.300H18.500" stroke="#1b2c4a" stroke-width="0.700"/><path d="M1.600 12V9.500L5 8.500L7.500 7L10 7.200L12.500 4.500L14.500 5L17.800 2V12Z" fill="#6c7b93"/><path d="M1.600 12V11L5 10L7.500 9L10 9.200L12.500 7L14.500 7.300L17.800 4.500V12Z" fill="#1b2c4a"/></svg>
<svg class="abs" style="left:5.0px;top:190.4px" width="19" height="13" viewBox="0 0 19 13" fill="none"><path d="M1 0.500V12.300H18.500" stroke="#56647f" stroke-width="0.700"/><circle cx="3" cy="9" r="0.450" fill="#8793a8"/><circle cx="4.5" cy="7.5" r="0.450" fill="#8793a8"/><circle cx="5.5" cy="10" r="0.450" fill="#8793a8"/><circle cx="6.5" cy="6.5" r="0.450" fill="#8793a8"/><circle cx="7.5" cy="8.5" r="0.450" fill="#8793a8"/><circle cx="8.5" cy="9.5" r="0.450" fill="#8793a8"/><circle cx="9.5" cy="5.5" r="0.450" fill="#8793a8"/><circle cx="10.5" cy="8" r="0.450" fill="#8793a8"/><circle cx="11.5" cy="10" r="0.450" fill="#8793a8"/><circle cx="12.5" cy="7" r="0.450" fill="#8793a8"/><circle cx="13.5" cy="9" r="0.450" fill="#8793a8"/><circle cx="14.5" cy="6" r="0.450" fill="#8793a8"/><circle cx="15.5" cy="9.5" r="0.450" fill="#8793a8"/><circle cx="16.5" cy="8" r="0.450" fill="#8793a8"/><circle cx="5" cy="9" r="0.450" fill="#8793a8"/><circle cx="8" cy="7" r="0.450" fill="#8793a8"/><circle cx="12" cy="9.5" r="0.450" fill="#8793a8"/></svg>
<svg class="abs" style="left:5.0px;top:215.5px" width="19" height="13" viewBox="0 0 19 13" fill="none"><path d="M1 0.500V12.300H18.500" stroke="#56647f" stroke-width="0.700"/><rect x="2.2" y="2" width="1.300" height="10" fill="#e8ecf2"/><rect x="4.3" y="3.5" width="1.300" height="8.5" fill="#e8ecf2"/><rect x="6.4" y="3" width="1.300" height="9" fill="#e8ecf2"/><rect x="8.5" y="4.5" width="1.300" height="7.5" fill="#e8ecf2"/><rect x="10.6" y="4" width="1.300" height="8" fill="#e8ecf2"/><rect x="12.7" y="5" width="1.300" height="7" fill="#e8ecf2"/><rect x="14.8" y="4.5" width="1.300" height="7.5" fill="#e8ecf2"/><rect x="16.9" y="6.5" width="1.300" height="5.5" fill="#e8ecf2"/></svg>
<svg class="abs" style="left:5.0px;top:241.1px" width="19" height="13" viewBox="0 0 19 13" fill="none"><path d="M1 0.500V12.300H18.500" stroke="#56647f" stroke-width="0.700"/><rect x="2.0" y="3" width="1.200" height="9" fill="#e8ecf2"/><rect x="3.6" y="7" width="1.200" height="5" fill="#e8ecf2"/><rect x="5.2" y="6" width="1.200" height="6" fill="#e8ecf2"/><rect x="6.8" y="9.5" width="1.200" height="2.5" fill="#e8ecf2"/><rect x="8.4" y="10" width="1.200" height="2" fill="#e8ecf2"/><rect x="10.0" y="9" width="1.200" height="3" fill="#e8ecf2"/><rect x="11.6" y="10.8" width="1.200" height="1.2" fill="#e8ecf2"/><rect x="13.2" y="10" width="1.200" height="2" fill="#e8ecf2"/><rect x="14.8" y="10.8" width="1.200" height="1.2" fill="#e8ecf2"/><rect x="16.4" y="11" width="1.200" height="1" fill="#e8ecf2"/></svg>
<svg class="abs" style="left:5.0px;top:266.3px" width="19" height="13" viewBox="0 0 19 13" fill="none"><path d="M1 0.500V12.300H18.500" stroke="#56647f" stroke-width="0.700"/><path d="M3.5 1.500V12" stroke="#56647f" stroke-width="0.700"/><circle cx="3.5" cy="8" r="0.500" fill="#8793a8"/><path d="M6.9 1.500V12" stroke="#56647f" stroke-width="0.700"/><circle cx="6.9" cy="5" r="0.500" fill="#8793a8"/><path d="M10.3 1.500V12" stroke="#56647f" stroke-width="0.700"/><circle cx="10.3" cy="7" r="0.500" fill="#8793a8"/><path d="M13.7 1.500V12" stroke="#56647f" stroke-width="0.700"/><circle cx="13.7" cy="4" r="0.500" fill="#8793a8"/><path d="M17.1 1.500V12" stroke="#56647f" stroke-width="0.700"/><circle cx="17.1" cy="9" r="0.500" fill="#8793a8"/></svg>
<svg class="abs" style="left:5.0px;top:291.9px" width="19" height="13" viewBox="0 0 19 13" fill="none"><path d="M1 0.500V12.300H18.500" stroke="#56647f" stroke-width="0.700"/><rect x="2.5" y="9" width="1.300" height="3" fill="#e8ecf2"/><rect x="4" y="3.5" width="1.300" height="8.5" fill="#e8ecf2"/><rect x="5.5" y="8.5" width="1.300" height="3.5" fill="#e8ecf2"/><rect x="8" y="9" width="1.300" height="3" fill="#e8ecf2"/><rect x="9.5" y="3" width="1.300" height="9" fill="#e8ecf2"/><rect x="11" y="8" width="1.300" height="4" fill="#e8ecf2"/><rect x="13.5" y="9" width="1.300" height="3" fill="#e8ecf2"/><rect x="15" y="2.5" width="1.300" height="9.5" fill="#e8ecf2"/><rect x="16.5" y="9" width="1.300" height="3" fill="#e8ecf2"/></svg>
<svg class="abs" style="left:5.0px;top:317.5px" width="19" height="13" viewBox="0 0 19 13" fill="none"><path d="M1 0.500V12.300H18.500" stroke="#56647f" stroke-width="0.700"/><rect x="2.0" y="2" width="1.200" height="10" fill="#e8ecf2"/><rect x="3.5" y="6" width="1.200" height="6" fill="#e8ecf2"/><rect x="5.0" y="8" width="1.200" height="4" fill="#e8ecf2"/><rect x="6.5" y="8.5" width="1.200" height="3.5" fill="#e8ecf2"/><rect x="8.0" y="9.5" width="1.200" height="2.5" fill="#e8ecf2"/><rect x="9.5" y="10" width="1.200" height="2" fill="#e8ecf2"/><rect x="11.0" y="12" width="1.200" height="0" fill="#e8ecf2"/><rect x="12.5" y="10.8" width="1.200" height="1.2" fill="#e8ecf2"/><rect x="14.0" y="11" width="1.200" height="1" fill="#e8ecf2"/><rect x="15.5" y="12" width="1.200" height="0" fill="#e8ecf2"/><rect x="17.0" y="11" width="1.200" height="1" fill="#e8ecf2"/></svg>
<svg class="abs" style="left:5.0px;top:342.6px" width="19" height="13" viewBox="0 0 19 13" fill="none"><path d="M1 0.500V12.300H18.500" stroke="#56647f" stroke-width="0.700"/><rect x="2.0" y="2.5" width="1.200" height="9.5" fill="#e8ecf2"/><rect x="3.5" y="4" width="1.200" height="8" fill="#e8ecf2"/><rect x="5.0" y="10" width="1.200" height="2" fill="#e8ecf2"/><rect x="6.5" y="10.5" width="1.200" height="1.5" fill="#e8ecf2"/><rect x="8.0" y="9.5" width="1.200" height="2.5" fill="#e8ecf2"/><rect x="9.5" y="11" width="1.200" height="1" fill="#e8ecf2"/><rect x="11.0" y="11.2" width="1.200" height="0.8" fill="#e8ecf2"/><rect x="12.5" y="12" width="1.200" height="0" fill="#e8ecf2"/><rect x="14.0" y="11.2" width="1.200" height="0.8" fill="#e8ecf2"/></svg>
<svg class="abs" style="left:5.0px;top:368.3px" width="19" height="13" viewBox="0 0 19 13" fill="none"><path d="M1 0.500V12.300H18.500" stroke="#56647f" stroke-width="0.700"/><path d="M2 10L5 8.500L7 9L10 6.500L12 7L17.500 3.500" stroke="#8793a8" stroke-width="0.600"/><path d="M2 8.500L17.500 5.500M2 10.500H17.500" stroke="#56647f" stroke-width="0.500" stroke-dasharray="1 0.800"/></svg>
<svg class="abs" style="left:5.0px;top:393.9px" width="19" height="13" viewBox="0 0 19 13" fill="none"><path d="M1 0.500V12.300H18.500" stroke="#56647f" stroke-width="0.700"/><path d="M1.500 12C5 12 5.5 2 8 2C10.5 2 12.500 12 18 12Z" fill="#c9d0da"/></svg>
<svg class="abs" style="left:5.0px;top:419.5px" width="19" height="13" viewBox="0 0 19 13" fill="none"><path d="M1 0.500V12.300H18.500" stroke="#56647f" stroke-width="0.700"/><path d="M1.500 12C5 12 7.0 2 9.5 2C12.0 2 12.500 12 18 12Z" fill="#c9d0da"/></svg>
<svg class="abs" style="left:5.0px;top:446.9px" width="19" height="13" viewBox="0 0 19 13" fill="none"><rect x="0.400" y="0.400" width="18.200" height="12.200" stroke="#8a97ad" stroke-width="0.600"/><rect x="2.300" y="2.500" width="3.500" height="3" fill="#7d8aa0"/><rect x="7.700" y="2.500" width="3.500" height="3" fill="#7d8aa0"/><rect x="13.100" y="2.500" width="3.500" height="3" fill="#7d8aa0"/><path d="M3 11V10L6 9L8.500 7.500L11 9L13 8L15.500 7V11Z" fill="#1b2c4a"/><path d="M2.500 11.200H16.500" stroke="#1b2c4a" stroke-width="0.500"/></svg>
<svg class="abs" style="left:5.0px;top:471.4px" width="19" height="13" viewBox="0 0 19 13" fill="none"><rect x="0.400" y="0.400" width="18.200" height="12.200" stroke="#3d4c68" stroke-width="0.600"/><circle cx="5.200" cy="4.800" r="2.500" fill="#c9d0da"/><rect x="9.500" y="3" width="6.500" height="1.300" fill="#5d6a83"/><rect x="9.500" y="5.200" width="6.500" height="1.300" fill="#5d6a83"/><path d="M2.500 11V10L5 9.500L7 10L9.500 9L12 9.800L14 9L16.500 8V11Z" fill="#c9d0da"/></svg>
<svg class="abs" style="left:5.0px;top:496.8px" width="19" height="13" viewBox="0 0 19 13" fill="none"><rect x="0.500" y="0.400" width="18" height="5.200" rx="1" fill="#4d5a73" stroke="#77839a" stroke-width="0.600"/><rect x="0.500" y="7.200" width="18" height="5.200" rx="1" fill="#4d5a73" stroke="#77839a" stroke-width="0.600"/></svg>
<div class="abs" style="left:872px;top:0;width:127px;height:562px;background:#f7fafd;overflow:hidden">
<div class="abs" style="left:0;top:0px;width:127px;height:40.0px;background:#031b35;border-radius:4px 4px 0 0"></div>
<div class="abs" style="left:0;top:27.4px;width:127px;height:37.6px;background:#e3eef7;border-radius:6px 6px 0 0"></div>
<div class="abs" style="left:0;top:53.5px;width:127px;height:41.5px;background:#f7fafd;border-radius:6px 6px 0 0"></div>
<div class="abs" style="left:0;top:81px;width:127px;height:39.0px;background:#e3eef7;border-radius:6px 6px 0 0"></div>
<div class="abs" style="left:0;top:107px;width:127px;height:53.0px;background:#f7fafd;border-radius:6px 6px 0 0"></div>
<div class="abs" style="left:0;top:148.7px;width:127px;height:41.3px;background:#e3eef7;border-radius:6px 6px 0 0"></div>
<div class="abs" style="left:0;top:176px;width:127px;height:56.0px;background:#f7fafd;border-radius:6px 6px 0 0"></div>
<div class="abs" style="left:0;top:218.5px;width:127px;height:43.5px;background:#031b35;border-radius:7px 7px 0 0"></div>
<div class="abs" style="left:0;top:245.9px;width:127px;height:39.1px;background:#e3eef7;border-radius:7px 7px 0 0"></div>
<div class="abs" style="left:0;top:272.5px;width:127px;height:137.5px;background:#f7fafd;border-radius:6px 6px 0 0"></div>
<div class="abs" style="left:0;top:395.8px;width:127px;height:40.2px;background:#e3eef7;border-radius:6px 6px 0 0"></div>
<div class="abs" style="left:0;top:423.2px;width:127px;height:86.8px;background:#f7fafd;border-radius:6px 6px 0 0"></div>
<div class="abs" style="left:0;top:497.5px;width:127px;height:38.5px;background:#e3eef7;border-radius:6px 6px 0 0"></div>
<div class="abs" style="left:0;top:523.4px;width:127px;height:12.6px;background:#f7fafd;border-radius:6px 6px 0 0"></div>
<div class="abs" style="left:0;top:524.2px;width:127px;height:37.8px;background:#e3eef7;border-radius:6px 6px 0 0"></div>
<div class="abs" style="left:0;top:551px;width:127px;height:11.0px;background:#f7fafd;border-radius:6px 6px 0 0"></div>
</div>
<svg class="abs" style="left:881.6px;top:11.8px" width="4.800" height="3"><polygon points="0,0 4.800,0 2.400,2.800" fill="#fff"/></svg>
<span class="t" style="left:893.60px;top:9.49px;font-size:8px;color:#fff;font-weight:700;letter-spacing:-0.161px;">Controls</span>
<svg class="abs" style="left:882.6px;top:37.6px" width="3.2" height="4.600"><polygon points="0,0 3,2.300 0,4.600" fill="#111"/></svg>
<span class="t" style="left:891.60px;top:37.00px;font-size:7.6px;color:#1c1c28;font-weight:700;letter-spacing:-0.161px;">Arrival &amp; departure lines</span>
<svg class="abs" style="left:881.7px;top:62.3px" width="8" height="8" viewBox="0 0 8 8"><rect width="8" height="8" rx="2" fill="#e6eef7"/><path d="M1.900 4.200L3.400 5.600L6.200 2.400" fill="none" stroke="#12357f" stroke-width="1.150"/></svg>
<span class="t" style="left:893.60px;top:63.11px;font-size:7.2px;color:#3e3e3e;letter-spacing:0.144px;">Enabled</span>
<svg class="abs" style="left:882.6px;top:91.1px" width="3.2" height="4.600"><polygon points="0,0 3,2.300 0,4.600" fill="#111"/></svg>
<span class="t" style="left:891.60px;top:89.40px;font-size:7.6px;color:#1c1c28;font-weight:700;letter-spacing:-0.203px;">WIP tooltips</span>
<svg class="abs" style="left:881.7px;top:115.6px" width="8" height="8" viewBox="0 0 8 8"><circle cx="4" cy="4" r="3.800" fill="#e1ebf6"/><circle cx="4" cy="4" r="1.700" fill="#1d4389"/></svg>
<span class="t" style="left:892.80px;top:116.41px;font-size:7.2px;color:#3e3e3e;letter-spacing:0.168px;">States</span>
<svg class="abs" style="left:881.7px;top:131.8px" width="8" height="8" viewBox="0 0 8 8"><circle cx="4" cy="4" r="3.600" fill="#fff" stroke="#dde5ee" stroke-width="0.700"/></svg>
<span class="t" style="left:892.80px;top:132.61px;font-size:7.2px;color:#3e3e3e;letter-spacing:0.062px;">Process</span>
<svg class="abs" style="left:882.6px;top:160.1px" width="3.2" height="4.600"><polygon points="0,0 3,2.300 0,4.600" fill="#111"/></svg>
<span class="t" style="left:891.60px;top:158.40px;font-size:7.6px;color:#1c1c28;font-weight:700;letter-spacing:-0.143px;">Cycle time tooltips</span>
<svg class="abs" style="left:881.7px;top:184.8px" width="8" height="8" viewBox="0 0 8 8"><circle cx="4" cy="4" r="3.800" fill="#e1ebf6"/><circle cx="4" cy="4" r="1.700" fill="#1d4389"/></svg>
<span class="t" style="left:892.80px;top:185.61px;font-size:7.2px;color:#3e3e3e;letter-spacing:0.168px;">States</span>
<svg class="abs" style="left:881.7px;top:200.8px" width="8" height="8" viewBox="0 0 8 8"><circle cx="4" cy="4" r="3.600" fill="#fff" stroke="#dde5ee" stroke-width="0.700"/></svg>
<span class="t" style="left:892.80px;top:201.61px;font-size:7.2px;color:#3e3e3e;letter-spacing:0.062px;">Process</span>
<svg class="abs" style="left:881.6px;top:230.8px" width="4.800" height="3"><polygon points="0,0 4.800,0 2.400,2.800" fill="#fff"/></svg>
<span class="t" style="left:893.60px;top:228.49px;font-size:8px;color:#fff;font-weight:700;letter-spacing:-0.194px;">Filters (212 cards)</span>
<svg class="abs" style="left:882.6px;top:256.7px" width="3.2" height="4.600"><polygon points="0,0 3,2.300 0,4.600" fill="#111"/></svg>
<span class="t" style="left:891.60px;top:254.90px;font-size:7.6px;color:#1c1c28;font-weight:700;letter-spacing:-0.547px;">Lists</span>
<span class="t" style="left:910.60px;top:255.05px;font-size:7.3px;color:#2a2a33;font-weight:700;letter-spacing:0.597px;">(5/6)</span>
<svg class="abs" style="left:881.7px;top:281.4px" width="8" height="8" viewBox="0 0 8 8"><rect x="0.300" y="0.300" width="7.400" height="7.400" rx="2" fill="#fff" stroke="#dde5ee" stroke-width="0.700"/></svg>
<span class="t" style="left:893.60px;top:282.21px;font-size:7.2px;color:#3e3e3e;letter-spacing:0.123px;">Select all</span>
<svg class="abs" style="left:881.7px;top:297.6px" width="8" height="8" viewBox="0 0 8 8"><rect x="0.300" y="0.300" width="7.400" height="7.400" rx="2" fill="#fff" stroke="#dde5ee" stroke-width="0.700"/></svg>
<div class="abs" style="left:894.2px;top:297.8px;width:7.600px;height:7.600px;border-radius:2px;background:#1fd1c1"></div>
<span class="t" style="left:907.30px;top:298.41px;font-size:7.2px;color:#3e3e3e;letter-spacing:0.223px;">Ready for Development</span>
<svg class="abs" style="left:881.7px;top:313.8px" width="8" height="8" viewBox="0 0 8 8"><rect width="8" height="8" rx="2" fill="#e6eef7"/><path d="M1.900 4.200L3.400 5.600L6.200 2.400" fill="none" stroke="#12357f" stroke-width="1.150"/></svg>
<div class="abs" style="left:894.2px;top:314.0px;width:7.600px;height:7.600px;border-radius:2px;background:#fcc94f"></div>
<span class="t" style="left:907.30px;top:314.61px;font-size:7.2px;color:#3e3e3e;letter-spacing:0.340px;">Development</span>
<svg class="abs" style="left:881.7px;top:329.8px" width="8" height="8" viewBox="0 0 8 8"><rect width="8" height="8" rx="2" fill="#e6eef7"/><path d="M1.900 4.200L3.400 5.600L6.200 2.400" fill="none" stroke="#12357f" stroke-width="1.150"/></svg>
<div class="abs" style="left:894.2px;top:330.0px;width:7.600px;height:7.600px;border-radius:2px;background:#d964ae"></div>
<span class="t" style="left:907.30px;top:330.61px;font-size:7.2px;color:#3e3e3e;letter-spacing:0.124px;">Ready for Code Review</span>
<svg class="abs" style="left:881.7px;top:345.7px" width="8" height="8" viewBox="0 0 8 8"><rect width="8" height="8" rx="2" fill="#e6eef7"/><path d="M1.900 4.200L3.400 5.600L6.200 2.400" fill="none" stroke="#12357f" stroke-width="1.150"/></svg>
<div class="abs" style="left:894.2px;top:345.9px;width:7.600px;height:7.600px;border-radius:2px;background:#fba4ac"></div>
<span class="t" style="left:907.30px;top:346.51px;font-size:7.2px;color:#3e3e3e;letter-spacing:0.141px;">Code Review</span>
<svg class="abs" style="left:881.7px;top:361.9px" width="8" height="8" viewBox="0 0 8 8"><rect width="8" height="8" rx="2" fill="#e6eef7"/><path d="M1.900 4.200L3.400 5.600L6.200 2.400" fill="none" stroke="#12357f" stroke-width="1.150"/></svg>
<div class="abs" style="left:894.2px;top:362.1px;width:7.600px;height:7.600px;border-radius:2px;background:#a04fa6"></div>
<span class="t" style="left:907.30px;top:362.71px;font-size:7.2px;color:#3e3e3e;letter-spacing:0.176px;">Ready for Testing</span>
<svg class="abs" style="left:881.7px;top:378.1px" width="8" height="8" viewBox="0 0 8 8"><rect width="8" height="8" rx="2" fill="#e6eef7"/><path d="M1.900 4.200L3.400 5.600L6.200 2.400" fill="none" stroke="#12357f" stroke-width="1.150"/></svg>
<div class="abs" style="left:894.2px;top:378.3px;width:7.600px;height:7.600px;border-radius:2px;background:#a9d2fb"></div>
<span class="t" style="left:907.30px;top:378.91px;font-size:7.2px;color:#3e3e3e;letter-spacing:0.274px;">Testing</span>
<svg class="abs" style="left:882.6px;top:406.4px" width="3.2" height="4.600"><polygon points="0,0 3,2.300 0,4.600" fill="#111"/></svg>
<span class="t" style="left:891.60px;top:405.20px;font-size:7.6px;color:#1c1c28;font-weight:700;letter-spacing:-0.244px;">Labels</span>
<span class="t" style="left:917.70px;top:405.35px;font-size:7.3px;color:#2a2a33;font-weight:700;letter-spacing:0.597px;">(3/3)</span>
<svg class="abs" style="left:881.7px;top:431.1px" width="8" height="8" viewBox="0 0 8 8"><rect width="8" height="8" rx="2" fill="#e6eef7"/><path d="M1.900 4.200L3.400 5.600L6.200 2.400" fill="none" stroke="#12357f" stroke-width="1.150"/></svg>
<span class="t" style="left:893.60px;top:431.91px;font-size:7.2px;color:#3e3e3e;letter-spacing:0.123px;">Select all</span>
<svg class="abs" style="left:881.7px;top:447.4px" width="8" height="8" viewBox="0 0 8 8"><rect width="8" height="8" rx="2" fill="#e6eef7"/><path d="M1.900 4.200L3.400 5.600L6.200 2.400" fill="none" stroke="#12357f" stroke-width="1.150"/></svg>
<span class="t" style="left:893.60px;top:448.21px;font-size:7.2px;color:#3e3e3e;letter-spacing:0.253px;">Cards without labels</span>
<svg class="abs" style="left:881.7px;top:463.3px" width="8" height="8" viewBox="0 0 8 8"><rect width="8" height="8" rx="2" fill="#e6eef7"/><path d="M1.900 4.200L3.400 5.600L6.200 2.400" fill="none" stroke="#12357f" stroke-width="1.150"/></svg>
<span class="t" style="left:893.60px;top:464.11px;font-size:7.2px;color:#3e3e3e;letter-spacing:0.237px;">Can't be Reproduced</span>
<svg class="abs" style="left:881.7px;top:479.2px" width="8" height="8" viewBox="0 0 8 8"><rect width="8" height="8" rx="2" fill="#e6eef7"/><path d="M1.900 4.200L3.400 5.600L6.200 2.400" fill="none" stroke="#12357f" stroke-width="1.150"/></svg>
<span class="t" style="left:893.60px;top:480.01px;font-size:7.2px;color:#3e3e3e;letter-spacing:0.085px;">Ready for Retest</span>
<svg class="abs" style="left:882.6px;top:507.7px" width="3.2" height="4.600"><polygon points="0,0 3,2.300 0,4.600" fill="#111"/></svg>
<span class="t" style="left:891.60px;top:505.90px;font-size:7.6px;color:#1c1c28;font-weight:700;letter-spacing:-0.092px;">Members</span>
<span class="t" style="left:927.70px;top:506.05px;font-size:7.3px;color:#2a2a33;font-weight:700;letter-spacing:0.697px;">(6/6)</span>
<svg class="abs" style="left:882.6px;top:535.6px" width="3.2" height="4.600"><polygon points="0,0 3,2.300 0,4.600" fill="#111"/></svg>
<span class="t" style="left:891.60px;top:534.40px;font-size:7.6px;color:#1c1c28;font-weight:700;letter-spacing:-0.147px;">Work Type</span>
<span class="t" style="left:931.80px;top:533.95px;font-size:7.3px;color:#2a2a33;font-weight:700;letter-spacing:0.517px;">(2/2)</span>
<svg class="abs" style="left:953.4px;top:516.3px" width="28.8" height="28.8" viewBox="0 0 28.800 28.800"><circle cx="14.400" cy="14.400" r="15.200" fill="#f2f6fb" fill-opacity="0.8"/><circle cx="14.400" cy="14.400" r="14.400" fill="#031b35"/><path d="M10 10.200h8.600a0.800 0.800 0 0 1 0.800 0.800v5.600a0.800 0.800 0 0 1-0.800 0.800h-6.600l-2.800 2.200v-8.600a0.800 0.800 0 0 1 0.800-0.800z" fill="#fff"/><circle cx="12.100" cy="13.800" r="0.600" fill="#031b35"/><circle cx="14.300" cy="13.800" r="0.600" fill="#031b35"/><circle cx="16.500" cy="13.800" r="0.600" fill="#031b35"/></svg>
</div>
</body></html>
